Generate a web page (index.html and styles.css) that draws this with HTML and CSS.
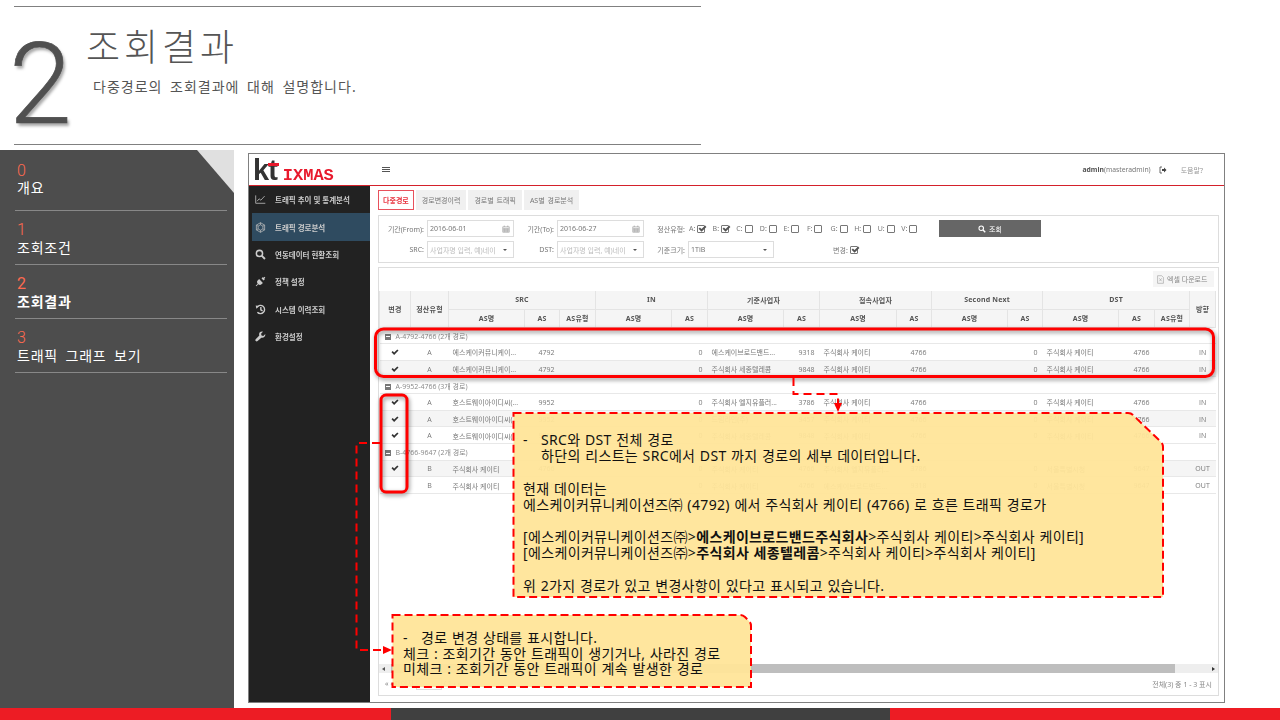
FILE: index.html
```html
<!DOCTYPE html>
<html lang="ko">
<head>
    <meta charset="UTF-8">
    <meta name="viewport" content="width=device-width, initial-scale=1.0">
    <title>조회결과</title>
    <link rel="stylesheet" href="styles.css">
</head>
<body>
    <svg class="defs" width="0" height="0">
        <symbol id="check" viewBox="0 0 16 16"><path d="M1 8.6 3.4 6.2 6.3 9.1 12.6 2.8 15 5.2 6.3 13.9Z"/></symbol>
        <symbol id="cal" viewBox="0 0 16 16"><path fill="none" stroke="#888" d="M1.5 3.5h13v11h-13zM1.5 6.5h13M4.5 1v3M11.5 1v3M4.5 6.5v8M8 6.5v8M11.5 6.5v8M1.5 9.5h13M1.5 12h13"/></symbol>
    </svg>

    <div class="slide">
        <header class="top">
            <div class="big-num">2</div>
            <div class="top-text">
                <h1>조회결과</h1>
                <p>다중경로의 조회결과에 대해 설명합니다.</p>
            </div>
        </header>

        <div class="main">
            <nav class="toc">
                <div class="toc-item"><span class="no">0</span><span>개요</span></div>
                <div class="toc-item"><span class="no">1</span><span>조회조건</span></div>
                <div class="toc-item on"><span class="no">2</span><span>조회결과</span></div>
                <div class="toc-item"><span class="no">3</span><span>트래픽 그래프 보기</span></div>
            </nav>

            <!-- captured app -->
            <div class="app">
                <div class="app-head">
                    <div class="logo"><span class="kt">kt</span><span class="ixmas">IXMAS</span></div>
                    <div class="burger"><i></i><i></i><i></i></div>
                    <div class="user"><b>admin</b>(masteradmin)</div>
                    <svg class="logout" viewBox="0 0 16 16"><path fill="none" stroke="#444" stroke-width="1.6" d="M6 2H2v12h4"/><path fill="#444" d="M6 6h4V3l5 5-5 5v-3H6z"/></svg>
                    <div class="help">도움말?</div>
                </div>
                <div class="app-body">
                    <aside class="side">
                        <a class="side-item"><svg viewBox="0 0 16 16"><path fill="none" stroke="#bbb" stroke-width="1.2" d="M1 2v11.5h14M3 10.5l3-3.5 2.500 2L14 3"/></svg>트래픽 추이 및 통계분석</a>
                        <a class="side-item on"><svg viewBox="0 0 16 16"><path fill="none" stroke="#bbb" stroke-width="1.1" d="M8 1l6 3.500v7L8 15l-6-3.500v-7zM8 4l3.500 2v4L8 12l-3.500-2V6zM8 1v3M14 4.500 11.500 6M14 11.500 11.500 10M8 15v-3M2 11.500 4.500 10M2 4.500 4.500 6"/></svg>트래픽 경로분석</a>
                        <a class="side-item"><svg viewBox="0 0 16 16"><circle cx="6.500" cy="6.500" r="4.500" fill="none" stroke="#ccc" stroke-width="2.200"/><path stroke="#ccc" stroke-width="2.800" d="M10 10l4.500 4.500"/></svg>연동데이터 현황조회</a>
                        <a class="side-item"><svg viewBox="0 0 16 16"><path fill="#ccc" d="M9.500 3.500 12.500 6.500 14.500 4.500 13.500 3.500 15 2 14 1 12.500 2.500 11.500 1.500ZM6 4.500 11.500 10 9 12.500C7.500 13.500 6 13 4.800 12L2 15 1 14 4 11.200C3 10 2.500 8.500 3.500 7Z"/></svg>정책 설정</a>
                        <a class="side-item"><svg viewBox="0 0 16 16"><path fill="none" stroke="#ccc" stroke-width="2" d="M3 4.500A6 6 0 1 1 3.500 12M8.500 4.500V8.500L11 10"/><path fill="#ccc" d="M1 2l5 1-4 4z"/></svg>시스템 이력조회</a>
                        <a class="side-item"><svg viewBox="0 0 16 16"><path fill="#ccc" d="M15 4.500 12 7.200 9.500 6.500 8.800 4 11.500 1C9 .3 6.500 1.500 6 4c-.2 1 0 2 .3 2.700L1 12c-.8 1 -.6 2 .2 2.700.8.700 1.800.7 2.600-.1L9.200 9.700c2.800 1 6.300-1.500 5.800-5.200Z"/></svg>환경설정</a>
                    </aside>

                    <section class="content">
                        <div class="tabs">
                            <a class="tab on">다중경로</a>
                            <a class="tab">경로변경이력</a>
                            <a class="tab">경로별 트래픽</a>
                            <a class="tab">AS별 경로분석</a>
                        </div>

                        <div class="filter">
                            <div class="f-row">
                                <label class="lb lb1">기간(From):</label>
                                <span class="inp">2016-06-01<svg class="cal"><use href="#cal"/></svg></span>
                                <label class="lb lb2">기간(To):</label>
                                <span class="inp">2016-06-27<svg class="cal"><use href="#cal"/></svg></span>
                                <label class="lb lb3">정산유형:</label>
                                <div class="types">
                                    <span class="ck">A:<i class="box"><svg><use href="#check"/></svg></i></span>
                                    <span class="ck">B:<i class="box"><svg><use href="#check"/></svg></i></span>
                                    <span class="ck">C:<i class="box"></i></span>
                                    <span class="ck">D:<i class="box"></i></span>
                                    <span class="ck">E:<i class="box"></i></span>
                                    <span class="ck">F:<i class="box"></i></span>
                                    <span class="ck">G:<i class="box"></i></span>
                                    <span class="ck">H:<i class="box"></i></span>
                                    <span class="ck">U:<i class="box"></i></span>
                                    <span class="ck">V:<i class="box"></i></span>
                                </div>
                                <a class="search-btn"><svg viewBox="0 0 16 16"><circle cx="6.500" cy="6.500" r="4.500" fill="none" stroke="#fff" stroke-width="2.200"/><path stroke="#fff" stroke-width="2.800" d="M10 10l4.500 4.500"/></svg>조회</a>
                            </div>
                            <div class="f-row">
                                <label class="lb lb1">SRC:</label>
                                <span class="inp ph">사업자명 입력, 예)네이<i class="caret"></i></span>
                                <label class="lb lb2">DST:</label>
                                <span class="inp ph">사업자명 입력, 예)네이<i class="caret"></i></span>
                                <label class="lb lb3">기준크기:</label>
                                <span class="inp size">1TiB<i class="caret"></i></span>
                                <span class="ck changed">변경:<i class="box"><svg><use href="#check"/></svg></i></span>
                            </div>
                        </div>

                        <div class="panel">
                            <div class="toolbar">
                                <a class="excel"><svg viewBox="0 0 12 14"><path fill="none" stroke="#999" d="M1 .5h7l3 3v10H1zM4 5l4 5M8 5l-4 5"/></svg>엑셀 다운로드</a>
                            </div>
                            <table class="grid">
                                <colgroup>
                                    <col class="c31"><col class="c38">
                                    <col class="c76"><col class="c35"><col class="c36">
                                    <col class="c76"><col class="c36">
                                    <col class="c76"><col class="c36">
                                    <col class="c77"><col class="c35">
                                    <col class="c76"><col class="c35">
                                    <col class="c76"><col class="c36"><col class="c35">
                                    <col class="c26">
                                </colgroup>
                                <thead>
                                    <tr>
                                        <th rowspan="2">변경</th><th rowspan="2">정산유형</th>
                                        <th colspan="3">SRC</th><th colspan="2">IN</th>
                                        <th colspan="2">기준사업자</th><th colspan="2">접속사업자</th>
                                        <th colspan="2">Second Next</th><th colspan="3">DST</th>
                                        <th rowspan="2">방향</th>
                                    </tr>
                                    <tr>
                                        <th>AS명</th><th>AS</th><th>AS유형</th>
                                        <th>AS명</th><th>AS</th>
                                        <th>AS명</th><th>AS</th>
                                        <th>AS명</th><th>AS</th>
                                        <th>AS명</th><th>AS</th>
                                        <th>AS명</th><th>AS</th><th>AS유형</th>
                                    </tr>
                                </thead>
                                <tbody>
                                    <tr class="group"><td colspan="17"><i class="minus"></i>A-4792-4766 (2개 경로)</td></tr>
                                    <tr><td class="mid"><svg class="tick"><use href="#check"/></svg></td><td class="mid">A</td><td>에스케이커뮤니케이...</td><td class="num">4792</td><td></td><td></td><td class="num">0</td><td>에스케이브로드밴드...</td><td class="num">9318</td><td>주식회사 케이티</td><td class="num">4766</td><td></td><td class="num">0</td><td>주식회사 케이티</td><td class="num">4766</td><td></td><td class="mid">IN</td></tr>
                                    <tr class="alt"><td class="mid"><svg class="tick"><use href="#check"/></svg></td><td class="mid">A</td><td>에스케이커뮤니케이...</td><td class="num">4792</td><td></td><td></td><td class="num">0</td><td>주식회사 세종텔레콤</td><td class="num">9848</td><td>주식회사 케이티</td><td class="num">4766</td><td></td><td class="num">0</td><td>주식회사 케이티</td><td class="num">4766</td><td></td><td class="mid">IN</td></tr>
                                    <tr class="group"><td colspan="17"><i class="minus"></i>A-9952-4766 (3개 경로)</td></tr>
                                    <tr><td class="mid"><svg class="tick"><use href="#check"/></svg></td><td class="mid">A</td><td>호스트웨이아이디씨(...</td><td class="num">9952</td><td></td><td></td><td class="num">0</td><td>주식회사 엘지유플러...</td><td class="num">3786</td><td>주식회사 케이티</td><td class="num">4766</td><td></td><td class="num">0</td><td>주식회사 케이티</td><td class="num">4766</td><td></td><td class="mid">IN</td></tr>
                                    <tr class="alt"><td class="mid"><svg class="tick"><use href="#check"/></svg></td><td class="mid">A</td><td>호스트웨이아이디씨(...</td><td class="num">9952</td><td></td><td></td><td class="num">0</td><td>드림라인(주)</td><td class="num">9457</td><td>주식회사 케이티</td><td class="num">4766</td><td></td><td class="num">0</td><td>주식회사 케이티</td><td class="num">4766</td><td></td><td class="mid">IN</td></tr>
                                    <tr><td class="mid"><svg class="tick"><use href="#check"/></svg></td><td class="mid">A</td><td>호스트웨이아이디씨(...</td><td class="num">9952</td><td></td><td></td><td class="num">0</td><td>주식회사 세종텔레콤</td><td class="num">9848</td><td>주식회사 케이티</td><td class="num">4766</td><td></td><td class="num">0</td><td>주식회사 케이티</td><td class="num">4766</td><td></td><td class="mid">IN</td></tr>
                                    <tr class="group"><td colspan="17"><i class="minus"></i>B-4766-9647 (2개 경로)</td></tr>
                                    <tr class="alt"><td class="mid"><svg class="tick"><use href="#check"/></svg></td><td class="mid">B</td><td>주식회사 케이티</td><td class="num">4766</td><td></td><td></td><td class="num">0</td><td>주식회사 케이티</td><td class="num">4766</td><td>주식회사 엘지유플러...</td><td class="num">3786</td><td></td><td class="num">0</td><td>서울특별시청</td><td class="num">9647</td><td></td><td class="mid">OUT</td></tr>
                                    <tr><td class="mid"></td><td class="mid">B</td><td>주식회사 케이티</td><td class="num">4766</td><td></td><td></td><td class="num">0</td><td>주식회사 케이티</td><td class="num">4766</td><td>에스케이브로드밴드...</td><td class="num">9318</td><td></td><td class="num">0</td><td>서울특별시청</td><td class="num">9647</td><td></td><td class="mid">OUT</td></tr>
                                </tbody>
                            </table>
                            <div class="spacer"></div>
                            <div class="hscroll"><i class="arr-l"></i><div class="thumb"></div><i class="arr-r"></i></div>
                            <div class="pager"><span class="pg-left">« ‹ 페이지 <i class="pg-box"></i> / 1 › »</span><span>전체(3) 중 1 - 3 표시</span></div>
                        </div>
                    </section>
                </div>
            </div>
        </div>

        <div class="foot"><i class="f-red1"></i><i class="f-dark"></i><i class="f-red2"></i></div>

        <!-- annotations drawn over the capture -->
        <svg class="marks" viewBox="0 0 1280 720">
            <rect class="ring" x="375.500" y="329" width="838" height="47.500" rx="8"/>
            <rect class="ring" x="381" y="395" width="26" height="97" rx="5"/>
            <path class="dash" d="M380 443H356.500V650H384"/>
            <path class="dash" d="M793.500 378V394H838V403"/>
            <path class="head" d="M392 650 383 646V654ZM838 412 834 403H842Z"/>
            <path class="note" d="M513.500 413H1128Q1131 413 1133 415L1161 442Q1163 444 1163 447V597H513.500Z"/>
            <path class="note" d="M392.500 615H740Q743 615 745 617L749 621Q751 623 751 626V687H392.500Z"/>
        </svg>
        <div class="note-text note-a">
            <p class="bullet"><span>-</span>SRC와 DST 전체 경로<br>하단의 리스트는 SRC에서 DST 까지 경로의 세부 데이터입니다.</p>
            <br>
            현재 데이터는<br>
            에스케이커뮤니케이션즈㈜ (4792) 에서 주식회사 케이티 (4766) 로 흐른 트래픽 경로가<br>
            <br>
            [에스케이커뮤니케이션즈㈜&gt;<b>에스케이브로드밴드주식회사</b>&gt;주식회사 케이티&gt;주식회사 케이티]<br>
            [에스케이커뮤니케이션즈㈜&gt;<b>주식회사 세종텔레콤</b>&gt;주식회사 케이티&gt;주식회사 케이티]<br>
            <br>
            위 2가지 경로가 있고 변경사항이 있다고 표시되고 있습니다.
        </div>
        <div class="note-text note-b">
            <p class="bullet"><span>-</span>경로 변경 상태를 표시합니다.</p>
            체크 : 조회기간 동안 트래픽이 생기거나, 사라진 경로<br>
            미체크 : 조회기간 동안 트래픽이 계속 발생한 경로
        </div>
    </div>
</body>
</html>
```

FILE: styles.css
```css
* {
    box-sizing: border-box;
}
body {
    margin: 0;
    background: #fff;
    font-family: "Noto Sans", "Noto Sans CJK KR", sans-serif;
    overflow: hidden;
}
.defs {
    position: absolute;
}
.slide {
    position: relative;
    width: 1280px;
    height: 720px;
    display: flex;
    flex-direction: column;
}

/* title area */
.top {
    height: 139px;
    margin: 6px 579px 0 14px;
    border-top: 1px solid #808080;
    border-bottom: 1px solid #808080;
    display: flex;
}
.big-num {
    font-family: Roboto, sans-serif;
    font-weight: 300;
    font-size: 113px;
    line-height: 134px;
    width: 77px;
    margin: 11px 0 0 -5px;
    color: #505050;
    -webkit-text-stroke: .7px #505050;
    text-shadow: 2px 3px 3px #aaa;
}
.top-text h1 {
    margin: 17px 0 0 0;
    font-size: 37px;
    font-weight: 300;
    line-height: 46px;
    color: #555;
    letter-spacing: 4px;
}
.top-text p {
    margin: 7px 0 0 7px;
    font-size: 14px;
    line-height: 20px;
    color: #555;
    letter-spacing: 1px;
    word-spacing: 3px;
}

/* chapter list */
.main {
    display: flex;
    height: 558px;
    margin-top: 5px;
}
.toc {
    position: relative;
    width: 234px;
    background: #4d4d4d;
    padding: 7px 7px 0 15px;
}
.toc::before {
    content: "";
    position: absolute;
    top: 0;
    right: 0;
    border-top: 43px solid #e0e0e0;
    border-left: 37px solid transparent;
}
.toc-item {
    height: 54px;
    padding: 10px 0 0 2px;
    border-bottom: 1px solid #888;
    display: flex;
    flex-direction: column;
    color: #fff;
    font-size: 14px;
    line-height: 18px;
    letter-spacing: .8px;
    word-spacing: 3px;
}
.toc-item:first-child {
    padding-top: 6px;
}
.toc-item:first-child .no {
    line-height: 16px;
}
.toc-item .no {
    color: #ff6a50;
    font-family: Roboto, sans-serif;
    font-weight: 300;
    font-size: 16px;
}
.toc-item.on .no {
    font-weight: 400;
}
.toc-item.on span:last-child {
    font-weight: 700;
}

/* the captured application */
.app {
    width: 977px;
    height: 550px;
    margin: 3px 0 0 14px;
    border: 1px solid #808080;
    display: flex;
    flex-direction: column;
    font-size: 7px;
    color: #777;
    filter: blur(.35px);
}
.app-head {
    height: 32px;
    display: flex;
    align-items: center;
    border-bottom: 1px solid #d4212b;
}
.logo {
    width: 133px;
    padding-left: 4px;
    display: flex;
    align-items: baseline;
    position: relative;
}
.kt {
    font-family: "Liberation Sans", sans-serif;
    font-weight: 700;
    font-size: 29px;
    line-height: 30px;
    letter-spacing: -1px;
    color: #333;
}
.kt::after {
    content: "";
    position: absolute;
    left: 19px;
    top: 8px;
    width: 11px;
    height: 3px;
    background: #e8192c;
}
.ixmas {
    margin-left: 6px;
    font-family: "Liberation Mono", monospace;
    font-weight: 700;
    font-size: 17px;
    color: #e8192c;
}
.burger {
    width: 8px;
}
.burger i {
    display: block;
    height: 1px;
    margin-bottom: 1px;
    background: #555;
}
.user {
    margin-left: auto;
    font-size: 6.800px;
}
.user b {
    color: #555;
}
.logout {
    width: 8px;
    height: 8px;
    margin-left: 8px;
}
.help {
    margin: 0 21px 0 14px;
    color: #999;
}
.app-body {
    flex: 1;
    display: flex;
    min-height: 0;
}
.side {
    width: 122px;
    background: #222;
    border-right: 1px solid #fff;
    display: flex;
    flex-direction: column;
}
.side-item {
    height: 27.400px;
    display: flex;
    align-items: center;
    gap: 9px;
    padding-left: 6px;
    color: #ccc;
    font-size: 7.500px;
    font-weight: 700;
    white-space: nowrap;
}
.side-item svg {
    width: 11px;
    height: 11px;
    flex: none;
}
.side-item.on {
    margin-left: 3px;
    padding-left: 3px;
    background: #2f4b60;
}

.content {
    flex: 1;
    min-width: 0;
    padding: 4px 5px 0 7px;
}
.tabs {
    display: flex;
    gap: 2px;
    height: 20px;
}
.tab {
    height: 20px;
    padding: 0 6px;
    display: flex;
    align-items: center;
    background: #f0f0f0;
    word-spacing: 1px;
}
.tab.on {
    padding: 0 4px;
    background: #fff;
    border: 1px solid #e8515c;
    color: #e8303c;
    font-weight: 700;
}

.filter {
    height: 48px;
    margin-top: 5px;
    border: 1px solid #ddd;
    padding-top: 4px;
    display: flex;
    flex-direction: column;
    gap: 4px;
}
.f-row {
    height: 17px;
    display: flex;
    align-items: center;
}
.lb {
    text-align: right;
    white-space: nowrap;
}
.lb1 {
    width: 45px;
    margin-right: 3px;
}
.lb2 {
    width: 40px;
    margin-right: 3px;
}
.lb3 {
    width: 41px;
    margin-right: 3px;
}
.inp {
    width: 87px;
    height: 17px;
    border: 1px solid #ddd;
    padding: 0 2px;
    display: flex;
    align-items: center;
    justify-content: space-between;
    white-space: nowrap;
    overflow: hidden;
}
.inp.ph {
    color: #bbb;
}
.inp.size {
    width: 86px;
    color: #777;
}
.cal {
    width: 8px;
    height: 8px;
    margin-right: 1px;
}
.caret {
    margin-right: 4px;
    border-top: 2.500px solid #555;
    border-left: 2.500px solid transparent;
    border-right: 2.500px solid transparent;
}
.types {
    display: flex;
    width: 236px;
}
.ck {
    width: 24.200px;
    padding-left: 1px;
    display: flex;
    align-items: center;
    gap: 2px;
}
.box {
    width: 8px;
    height: 8px;
    border: 1px solid #777;
    border-radius: 1px;
    flex: none;
}
.box svg {
    display: block;
    width: 9px;
    height: 9px;
    margin: -2px 0 0 0;
    fill: #555;
}
.changed {
    width: auto;
    margin-left: 58px;
}
.search-btn {
    width: 102px;
    height: 17px;
    margin-left: 15px;
    background: #666;
    color: #fff;
    display: flex;
    align-items: center;
    justify-content: center;
    gap: 3px;
}
.search-btn svg {
    width: 8px;
    height: 8px;
}

.panel {
    height: 429px;
    margin-top: 4px;
    border: 1px solid #ddd;
    display: flex;
    flex-direction: column;
}
.toolbar {
    height: 23px;
    padding: 3px 4px 0 0;
    display: flex;
    justify-content: flex-end;
}
.excel {
    width: 61px;
    height: 16px;
    background: #f5f5f5;
    display: flex;
    align-items: center;
    gap: 3px;
    padding-left: 4px;
    color: #888;
}
.excel svg {
    width: 7px;
    height: 9px;
}
.grid {
    table-layout: fixed;
    width: 836px;
    border-collapse: collapse;
}
.c26 { width: 26px; }
.c31 { width: 31px; }
.c35 { width: 35px; }
.c36 { width: 36px; }
.c38 { width: 38px; }
.c76 { width: 76px; }
.c77 { width: 77px; }
.grid th {
    height: 18px;
    padding: 0;
    background: #f5f5f5;
    border: 1px solid #e4e4e4;
    border-top: 0;
    color: #555;
    font-weight: 700;
    font-size: 7px;
    letter-spacing: .2px;
}
.grid td {
    height: 16.650px;
    padding: 1px 0 0 4px;
    border-bottom: 1px solid #e8e8e8;
    white-space: nowrap;
    overflow: hidden;
    font-size: 7px;
    font-family: "Open Sans", "Noto Sans CJK KR", sans-serif;
}
.grid td.num {
    padding: 1px 5px 0 0;
    text-align: right;
}
.grid td.mid {
    padding: 1px 0 0 0;
    text-align: center;
}
.grid .alt td {
    background: #f5f5f5;
}
.grid .group td {
    padding-left: 5px;
    color: #888;
}
.minus {
    display: inline-block;
    width: 6px;
    height: 6px;
    margin-right: 5px;
    background: linear-gradient(#fff, #fff) center/4px 1px no-repeat #777;
    vertical-align: -1px;
}
.tick {
    width: 8px;
    height: 8px;
    fill: #333;
    vertical-align: -1px;
}
.spacer {
    flex: 1;
}
.hscroll {
    height: 9px;
    background: #eee;
    display: flex;
    align-items: center;
}
.thumb {
    width: 784px;
    height: 9px;
    margin-left: 6px;
    background: #bebebe;
}
.arr-l {
    margin-left: 3px;
    border-right: 3px solid #555;
    border-top: 2px solid transparent;
    border-bottom: 2px solid transparent;
}
.arr-r {
    margin-left: auto;
    margin-right: 3px;
    border-left: 3px solid #333;
    border-top: 2px solid transparent;
    border-bottom: 2px solid transparent;
}
.pager {
    height: 22px;
    padding: 0 6px;
    display: flex;
    justify-content: space-between;
    align-items: center;
    color: #888;
}
.pg-box {
    display: inline-block;
    width: 26px;
    height: 12px;
    border: 1px solid #ddd;
    vertical-align: middle;
}

/* bottom stripe */
.foot {
    height: 12px;
    display: flex;
}
.f-red1 {
    width: 391px;
    background: #ed1c24;
}
.f-dark {
    width: 499px;
    background: #404040;
}
.f-red2 {
    flex: 1;
    background: #ed1c24;
}

/* annotations */
.marks {
    position: absolute;
    left: 0;
    top: 0;
    width: 1280px;
    height: 720px;
}
.ring {
    fill: none;
    stroke: #f00;
    stroke-width: 3;
    filter: drop-shadow(1px 2px 2px rgba(0, 0, 0, .45));
}
.dash {
    fill: none;
    stroke: #f00;
    stroke-width: 2;
    stroke-dasharray: 8 5;
}
.head {
    fill: #f00;
}
.note {
    fill: rgba(255, 229, 153, .95);
    stroke: #f00;
    stroke-width: 2;
    stroke-dasharray: 8 4;
}
.note-text {
    position: absolute;
    color: #111;
    font-size: 14px;
    line-height: 16.200px;
    letter-spacing: .35px;
    word-spacing: .5px;
    white-space: nowrap;
}
.note-a {
    left: 523px;
    top: 432px;
}
.note-b {
    left: 403px;
    top: 630px;
    line-height: 15.700px;
}
.bullet {
    margin: 0;
    padding-left: 18px;
    position: relative;
}
.bullet span {
    position: absolute;
    left: 0;
}
```
